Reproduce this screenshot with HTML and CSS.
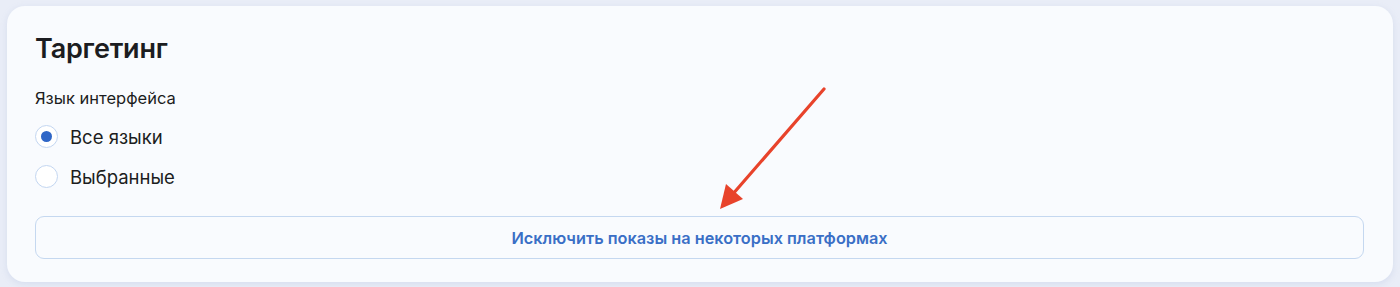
FILE: index.html
```html
<!DOCTYPE html>
<html lang="ru">
<head>
    <meta charset="UTF-8">
    <title>Таргетинг</title>
    <link rel="stylesheet" href="styles.css">
</head>
<body>
    <section class="card">
        <h2 class="card-title">Таргетинг</h2>
        <div class="field">
            <p class="field-label">Язык интерфейса</p>
            <label class="radio">
                <input type="radio" name="lang" checked>
                <span class="radio-mark"></span>
                <span>Все языки</span>
            </label>
            <label class="radio">
                <input type="radio" name="lang">
                <span class="radio-mark"></span>
                <span>Выбранные</span>
            </label>
        </div>
        <button class="wide-btn" type="button">Исключить показы на некоторых платформах</button>

        <!-- стрелка-подсказка поверх карточки -->
        <svg class="hint-arrow" width="120" height="130" viewBox="0 0 120 130">
            <line x1="110" y1="4" x2="18" y2="110" stroke="#e8432b" stroke-width="3.2" stroke-linecap="round"/>
            <polygon points="6,124 12,99 29,114" fill="#e8432b"/>
        </svg>
    </section>
</body>
</html>
```

FILE: styles.css
```css
* {
    margin: 0;
    padding: 0;
    box-sizing: border-box;
}

body {
    background-color: #e9edf7;
    font-family: Inter, 'Noto Sans', sans-serif;
    color: #1c1d21;
    padding: 6px 7px 5px 7px;
}

.card {
    position: relative;
    background: #f9fbfe;
    border-radius: 18px;
    height: 276px;
    padding: 25px 29px 0 28px;
    box-shadow: 0 2px 6px rgba(160, 175, 215, 0.25);
}

.card-title {
    font-size: 27px;
    font-weight: 600;
    letter-spacing: -0.2px;
    line-height: 36px;
    margin-bottom: 21px;
}

.field-label {
    font-size: 16.5px;
    line-height: 20px;
    margin-bottom: 17px;
}

.radio {
    display: flex;
    align-items: center;
    gap: 12px;
    height: 23px;
    margin-bottom: 17px;
    font-size: 18.5px;
    cursor: pointer;
}

.radio input {
    display: none;
}

.radio-mark {
    width: 23px;
    height: 23px;
    border: 1.5px solid #c3d6f1;
    border-radius: 50%;
    background: #fff;
    display: flex;
    align-items: center;
    justify-content: center;
}

.radio input:checked + .radio-mark::after {
    content: "";
    width: 11px;
    height: 11px;
    border-radius: 50%;
    background: #2f66c7;
}

.wide-btn {
    display: block;
    width: 100%;
    height: 43px;
    margin-top: 28px;
    background: #f9fbfe;
    border: 1px solid #c5d8f0;
    border-radius: 9px;
    color: #3a6fc6;
    font-family: Inter, 'Noto Sans', sans-serif;
    font-size: 16.3px;
    font-weight: 600;
    cursor: pointer;
}

.hint-arrow {
    position: absolute;
    left: 707px;
    top: 79px;
}
```
